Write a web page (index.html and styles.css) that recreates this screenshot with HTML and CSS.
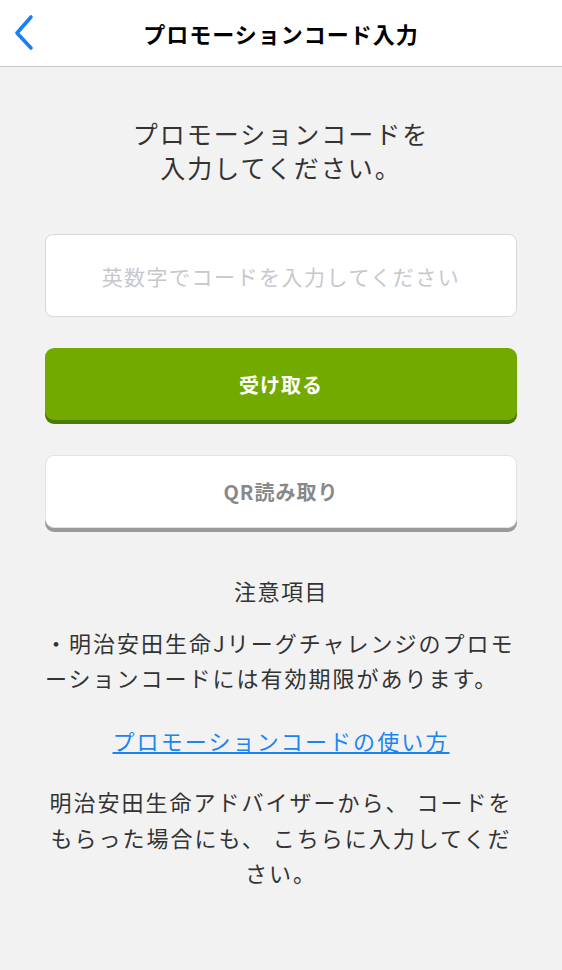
FILE: index.html
```html
<!DOCTYPE html>
<html lang="ja">
<head>
<meta charset="utf-8">
<link rel="stylesheet" href="styles.css">
</head>
<body>
<header class="nav">
  <span class="back"><svg width="40" height="40" viewBox="0 0 40 40"><polyline points="29,5 15,21 29,36" fill="none" stroke="#1a7ef5" stroke-width="3.6" stroke-linecap="round" stroke-linejoin="round"/></svg></span>
  <h1 class="nav-title">プロモーションコード入力</h1>
</header>
<main class="content">
  <p class="intro">プロモーションコードを<br>入力してください。</p>
  <div class="field"><span class="placeholder">英数字でコードを入力してください</span></div>
  <div class="btn btn-primary">受け取る</div>
  <div class="btn btn-secondary">QR読み取り</div>
  <h2 class="notice-title">注意項目</h2>
  <p class="notice">・明治安田生命Jリーグチャレンジのプロモ<br>ーションコードには有効期限があります。</p>
  <p class="link-row"><a class="link" href="#">プロモーションコードの使い方</a></p>
  <p class="note">明治安田生命アドバイザーから、 コードを<br>もらった場合にも、 こちらに入力してくだ<br>さい。</p>
</main>
</body>
</html>
```
FILE: styles.css
```css
* { box-sizing: border-box; }
html, body { margin: 0; padding: 0; }
body {
  background: #f2f2f2;
  font-family: "Noto Sans CJK JP", "Noto Sans", sans-serif;
  color: #333;
  width: 562px;
  min-height: 970px;
}
.nav {
  height: 67px;
  background: #fff;
  border-bottom: 1px solid #c6c6c6;
  display: flex;
  align-items: center;
  justify-content: center;
  position: relative;
}
.back {
  position: absolute;
  left: 2px;
  top: 12px;
  width: 40px;
  height: 40px;
}
.back svg { display: block; }
.nav-title {
  margin: 0;
  font-size: 22px;
  font-weight: 700;
  color: #000;
  letter-spacing: 1px;
}
.content {
  padding: 49px 45px 0;
  display: flex;
  flex-direction: column;
}
.intro {
  margin: 0;
  text-align: center;
  font-size: 25px;
  line-height: 34px;
  letter-spacing: 2px;
  color: #333;
}
.field {
  margin-top: 50px;
  height: 83px;
  background: #fff;
  border: 1px solid #d8d8d8;
  border-radius: 8px;
  display: flex;
  align-items: center;
  justify-content: center;
}
.placeholder {
  font-size: 21px;
  color: #c7c7cc;
  letter-spacing: 1.5px;
}
.btn {
  height: 73px;
  border-radius: 9px;
  display: flex;
  align-items: center;
  justify-content: center;
  font-size: 20px;
  font-weight: 700;
  letter-spacing: 1px;
}
.btn-primary {
  margin-top: 31px;
  height: 72px;
  background: #73aa00;
  color: #fff;
  box-shadow: 0 4px 0 #4d7a00;
}
.btn-secondary {
  margin-top: 35px;
  background: #fff;
  color: #888;
  border: 1px solid #e2e2e2;
  box-shadow: 0 4px 0 #9a9a9a;
}
.notice-title {
  margin: 45px 0 0;
  text-align: center;
  font-size: 22px;
  font-weight: 400;
  line-height: 35px;
  letter-spacing: 1.5px;
  color: #333;
}
.notice {
  margin: 17px 0 0;
  font-size: 22px;
  line-height: 35px;
  letter-spacing: 2px;
  white-space: nowrap;
  color: #333;
}
.link-row {
  margin: 28px 0 0;
  text-align: center;
  font-size: 22px;
  line-height: 35px;
}
.link {
  color: #1a84f5;
  text-decoration: underline;
  letter-spacing: 2.1px;
}
.note {
  margin: 26px 0 0;
  text-align: center;
  font-size: 22px;
  line-height: 35.5px;
  letter-spacing: 2px;
  white-space: nowrap;
  color: #333;
}
```
